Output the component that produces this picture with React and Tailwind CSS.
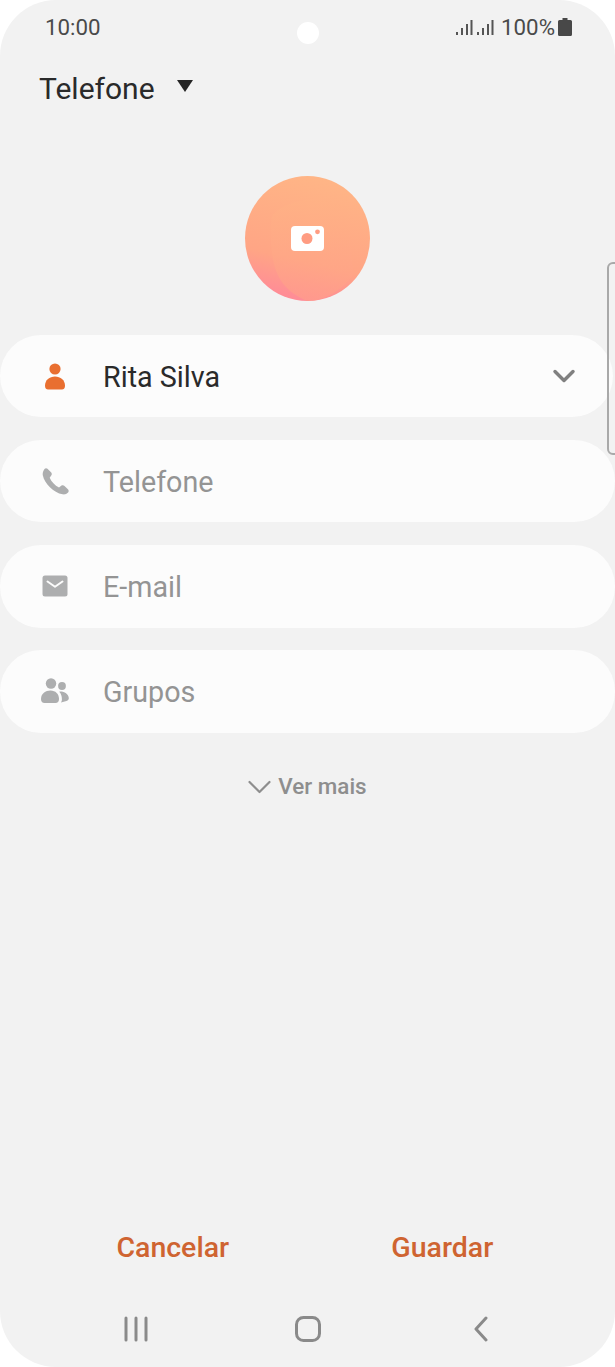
import React from "react";
import { ChevronDown } from "lucide-react";

function SignalIcon() {
  return (
    <svg width="17" height="17" viewBox="0 0 17 17" fill="#555555">
      <rect x="0" y="13" width="2" height="3" />
      <rect x="5" y="9" width="2" height="7" />
      <rect x="10" y="5" width="2" height="11" />
      <rect x="14.5" y="1" width="2" height="15" />
    </svg>
  );
}

function BatteryIcon() {
  return (
    <svg width="14" height="18" viewBox="0 0 14 18" fill="#484848">
      <path d="M4.500 0h5v2h3q1.500 0 1.500 1.500V16.500q0 1.500-1.500 1.500h-11Q0 18 0 16.500V3.500Q0 2 1.500 2h3z" />
    </svg>
  );
}

function PersonIcon() {
  return (
    <svg width="20" height="27" viewBox="0 0 20 27" fill="#e96f30">
      <circle cx="10" cy="6" r="5.600" />
      <path d="M0 23c0-6 4.500-9.500 10-9.500S20 17 20 23c0 2.500-1.500 3.500-3 3.500H3C1.500 26.500 0 25.500 0 23z" />
    </svg>
  );
}

function PhoneIcon() {
  return (
    <svg width="27" height="27" viewBox="0 0 27 27" fill="#adaeaf">
      <path d="M5.500 0.800 9 4.300c.9.900 1 2 .4 3L7.700 9.700c1.700 4 5.200 7.700 9.300 9.700l2.500-1.800c1-.6 2.100-.5 3 .3l3.400 3.400c1 1 1 2.300.2 3.200-1.500 1.500-3.400 2.200-5.500 1.800C11.500 24.700 2.500 15.500.8 7.200.4 4.900 1.100 3 2.500 1 3.300 0 4.600-.1 5.500.8z" />
    </svg>
  );
}

function MailIcon() {
  return (
    <svg width="26" height="22" viewBox="0 0 26 22">
      <rect x="0.500" y="0.500" width="25" height="21" rx="2.500" fill="#adaeaf" />
      <path d="M5.500 6.500 13 11.800l7.500-5.300" fill="none" stroke="#fcfcfc" strokeWidth="2" strokeLinecap="round" strokeLinejoin="round" />
    </svg>
  );
}

function GroupIcon() {
  return (
    <svg width="28" height="26" viewBox="0 0 28 26" fill="#adaeaf">
      <circle cx="10" cy="5.500" r="5.200" />
      <circle cx="21" cy="8" r="3.900" />
      <path d="M0 21c0-5.500 4.500-8.500 9.500-8.500S18 16 18 21c0 2.800-1.300 4-3.500 4h-11C1.300 25 0 23.800 0 21z" />
      <path d="M19.500 13.500c4 0 8 2.500 8.300 6.500.1 1.300-.7 2.500-2.300 3l-5.500 1.500c.8-1.200.9-2.300.9-3.500 0-2.700-.7-5.300-2.700-7.300.5-.2 1-.2 1.300-.2z" />
    </svg>
  );
}

// gradient disc with the soft lighter shapes and the camera glyph
function AvatarIcon() {
  return (
    <svg width="125" height="125" viewBox="0 0 125 125">
      <defs>
        <linearGradient id="disc" x1="0.550" y1="0" x2="0.330" y2="0.950">
          <stop offset="0" stopColor="#ffb586" />
          <stop offset="0.700" stopColor="#ffa585" />
          <stop offset="1" stopColor="#ff8d96" />
        </linearGradient>
        <linearGradient id="inner" x1="0.500" y1="0" x2="0.500" y2="1">
          <stop offset="0" stopColor="#ffb285" />
          <stop offset="1" stopColor="#ffa088" />
        </linearGradient>
      </defs>
      <circle cx="62.500" cy="62.500" r="62.500" fill="url(#disc)" />
      <path d="M27 40C40 22 85 18 104 32c2 20 0 45 5 65-10 15-27 28-46.500 28-20-8-32-22-35-45-2-14-3-28-.5-40z" fill="url(#inner)" opacity="0.600" />
      <rect x="46" y="50" width="33" height="25" rx="4" fill="#ffffff" />
      <circle cx="62" cy="62.500" r="5.500" fill="#ff9c82" />
      <circle cx="72.500" cy="55.800" r="2.400" fill="#ff9c82" />
    </svg>
  );
}

function FieldRow({ icon, label, dark, chevron }) {
  return (
    <div className="flex h-[82.700px] items-center rounded-[41px] bg-[#fcfcfc]">
      <div className="flex w-[103px] shrink-0 justify-center">
        <div className="mr-[-7px] flex w-[54px] justify-center">{icon}</div>
      </div>
      <span className={`flex-1 pt-[2px] text-[28.700px] ${dark ? "text-[#2a2a2a]" : "text-[#949494]"}`}>{label}</span>
      {chevron && <ChevronDown size={36} strokeWidth={2.300} className="mr-[31px] text-[#808080]" />}
    </div>
  );
}

export default function App() {
  return (
    <div className="h-[1367px] w-[615px] overflow-hidden bg-white font-['Roboto',sans-serif]">
      <div className="relative flex h-full flex-col overflow-hidden rounded-[56px] bg-[#f2f2f2]">
        {/* camera hole */}
        <div className="absolute left-[297px] top-[22px] h-[22px] w-[22px] rounded-full bg-white" />
        {/* edge panel handle */}
        <div className="absolute right-[-4px] top-[262px] z-10 h-[193px] w-[12px] rounded-l-[6px] border-2 border-[#a9a9a9]" />

        <div className="flex h-[56px] shrink-0 items-center justify-between pl-[45px] pr-[43px] text-[#4a4a4a]">
          <span className="text-[22.300px]">10:00</span>
          <div className="flex items-center">
            <div className="mb-[2px] flex">
              <SignalIcon />
              <div className="ml-[4px]">
                <SignalIcon />
              </div>
            </div>
            <span className="ml-[7px] text-[22.300px]">100%</span>
            <div className="mb-[3px] ml-[3px]">
              <BatteryIcon />
            </div>
          </div>
        </div>

        <div className="flex h-[64px] shrink-0 items-center pl-[39px]">
          <span className="text-[30px] text-[#2a2a2a]">Telefone</span>
          <div className="mb-[4px] ml-[22px] h-0 w-0 border-x-[8px] border-t-[12px] border-x-transparent border-t-[#262626]" />
        </div>

        <div className="mt-[56px] flex shrink-0 justify-center">
          <AvatarIcon />
        </div>

        <div className="mt-[33.700px] flex shrink-0 flex-col gap-[22.400px]">
          <div className="mr-[2px]">
            <FieldRow icon={<PersonIcon />} label="Rita Silva" dark chevron />
          </div>
          <FieldRow icon={<PhoneIcon />} label="Telefone" />
          <FieldRow icon={<MailIcon />} label="E-mail" />
          <FieldRow icon={<GroupIcon />} label="Grupos" />
        </div>

        <div className="mt-[37.500px] flex shrink-0 items-center justify-center text-[#8e8e8e]">
          <svg className="mr-[7px]" width="23" height="16" viewBox="0 0 23 16" fill="none" stroke="#8e8e8e" strokeWidth="2.200" strokeLinecap="round" strokeLinejoin="round">
            <path d="M1.500 3l10 10 10-10" />
          </svg>
          <span className="text-[22.400px] font-medium">Ver mais</span>
        </div>

        <div className="mt-auto flex h-[60px] shrink-0 items-center text-[28.500px] font-medium text-[#cf6431]">
          <div className="flex flex-1 justify-center pl-[38px]">Cancelar</div>
          <div className="flex flex-1 justify-center pr-[38px]">Guardar</div>
        </div>

        <div className="mb-[15px] mt-[28px] flex h-[46px] shrink-0 items-center justify-between pl-[123px] pr-[127px]">
          <svg width="26" height="26" viewBox="0 0 26 26" fill="none" stroke="#8a8a8a" strokeWidth="3" strokeLinecap="round">
            <path d="M3 2v22M13 2v22M23 2v22" />
          </svg>
          <svg className="mr-[5px]" width="26" height="26" viewBox="0 0 26 26" fill="none" stroke="#8a8a8a" strokeWidth="3">
            <rect x="1.500" y="1.500" width="23" height="23" rx="7" />
          </svg>
          <svg width="16" height="26" viewBox="0 0 16 26" fill="none" stroke="#8a8a8a" strokeWidth="3" strokeLinecap="round" strokeLinejoin="round">
            <path d="M14 2 4 13l10 11" />
          </svg>
        </div>
      </div>
    </div>
  );
}
